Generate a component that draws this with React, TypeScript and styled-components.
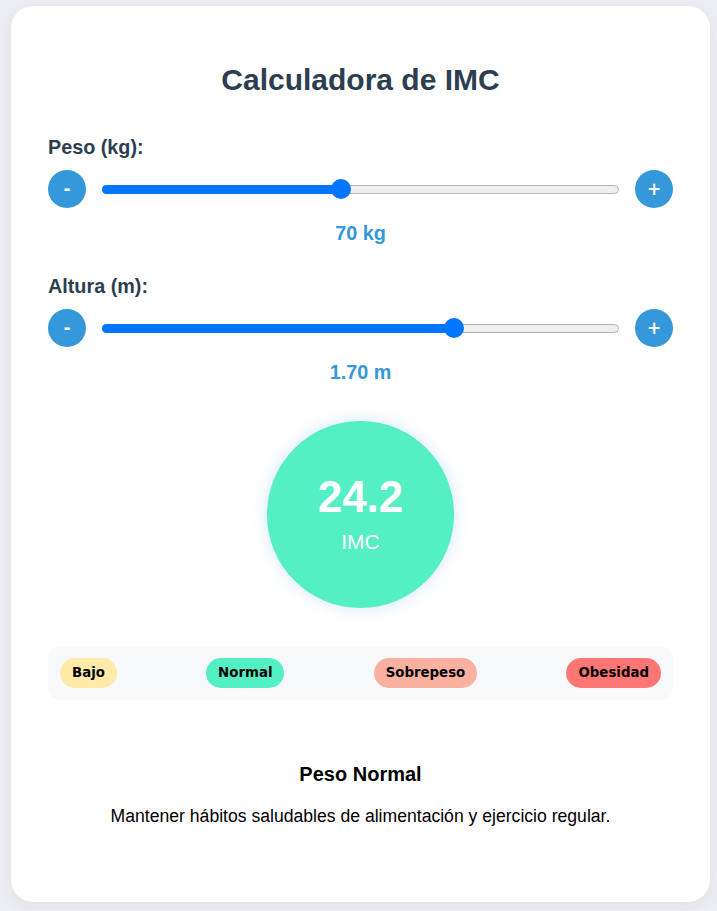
import React, { useState } from "react";
import styled, { createGlobalStyle } from "styled-components";

const GlobalStyle = createGlobalStyle`
  html, body { margin: 0; padding: 0; }
  body {
    background: #eceef2;
    font-family: "Liberation Sans", Arial, sans-serif;
  }
  * { box-sizing: border-box; }
`;

const Page = styled.div`
  padding: 6px 7px 8px 11px;
`;

const Card = styled.div`
  width: 699px;
  background: #ffffff;
  border-radius: 22px;
  padding: 57px 37px 77px;
  box-shadow: 0 4px 18px rgba(0, 0, 0, 0.06);
`;

const Title = styled.h1`
  margin: 0 0 39px;
  text-align: center;
  font-size: 30px;
  line-height: 34px;
  font-weight: 700;
  color: #2c3e50;
`;

const InputGroup = styled.div`
  & + & {
    margin-top: 31px;
  }
`;

const Label = styled.div`
  font-size: 19.8px;
  line-height: 22px;
  font-weight: 700;
  color: #2c3e50;
  margin-bottom: 12px;
`;

const SliderRow = styled.div`
  display: flex;
  align-items: center;
  gap: 16px;
`;

const RoundButton = styled.button`
  flex: 0 0 38px;
  width: 38px;
  height: 38px;
  border: none;
  border-radius: 50%;
  background: #3498db;
  color: #ffffff;
  font-family: "DejaVu Sans", sans-serif;
  font-weight: 700;
  font-size: 17px;
  line-height: 1;
  padding: 0;
  display: flex;
  align-items: center;
  justify-content: center;
  cursor: pointer;
`;

const SliderWrap = styled.div`
  position: relative;
  flex: 1;
  height: 20px;
  display: flex;
  align-items: center;
`;

const Track = styled.div`
  width: 100%;
  height: 9px;
  background: #efefef;
  border: 1px solid #b2b2b2;
  border-radius: 5px;
`;

const Fill = styled.div`
  position: absolute;
  left: 0;
  top: 50%;
  height: 9px;
  margin-top: -4.5px;
  width: calc(10px + var(--p) * (100% - 20px));
  background: #0075ff;
  border-radius: 5px;
`;

const Range = styled.input`
  position: absolute;
  inset: 0;
  width: 100%;
  height: 20px;
  margin: 0;
  background: transparent;
  -webkit-appearance: none;
  appearance: none;
  cursor: pointer;

  &::-webkit-slider-runnable-track {
    height: 20px;
    background: transparent;
  }
  &::-webkit-slider-thumb {
    -webkit-appearance: none;
    appearance: none;
    width: 20px;
    height: 20px;
    border-radius: 50%;
    background: #0075ff;
    border: none;
  }
  &:focus {
    outline: none;
  }
`;

const ValueText = styled.div`
  margin-top: 14px;
  text-align: center;
  font-size: 19.8px;
  line-height: 22px;
  font-weight: 700;
  color: #3498db;
`;

const Circle = styled.div<{ $bg: string }>`
  width: 187px;
  height: 187px;
  margin: 38px auto 38px;
  border-radius: 50%;
  background: ${(p) => p.$bg};
  box-shadow: 0 0 16px rgba(52, 152, 219, 0.22);
  display: flex;
  flex-direction: column;
  align-items: center;
  justify-content: center;
  color: #ffffff;
`;

const BmiValue = styled.div`
  font-size: 44px;
  line-height: 50px;
  font-weight: 700;
  margin-top: -3px;
`;

const BmiLabel = styled.div`
  font-size: 21px;
  line-height: 24px;
  margin-top: 8px;
`;

const Legend = styled.div`
  display: flex;
  justify-content: space-between;
  align-items: center;
  background: #f8f9fa;
  border-radius: 12px;
  padding: 12px;
`;

const Pill = styled.span<{ $bg: string }>`
  display: inline-block;
  background: ${(p) => p.$bg};
  border-radius: 15px;
  padding: 0 12px;
  height: 30px;
  line-height: 30px;
  font-family: "DejaVu Sans", sans-serif;
  font-size: 13.33px;
  font-weight: 700;
  color: #000000;
`;

const Result = styled.div`
  margin-top: 63px;
  text-align: center;
  color: #000000;
`;

const ResultTitle = styled.div`
  font-size: 20px;
  line-height: 22px;
  font-weight: 700;
`;

const ResultText = styled.p`
  margin: 22px 0 0;
  font-size: 17.6px;
  line-height: 18px;
`;

const categories = [
  { name: "Bajo", color: "#ffeaa7" },
  { name: "Normal", color: "#55efc4" },
  { name: "Sobrepeso", color: "#fab1a0" },
  { name: "Obesidad", color: "#ff7675" },
];

export default function App() {
  const [weight, setWeight] = useState(70);
  const [height, setHeight] = useState(1.7);

  const wMin = 10;
  const wMax = 140;
  const hMin = 0.6;
  const hMax = 2.2;

  const bmi = weight / (height * height);
  const wp = (weight - wMin) / (wMax - wMin);
  const hp = (height - hMin) / (hMax - hMin);

  const clampW = (v: number) => Math.min(wMax, Math.max(wMin, v));
  const clampH = (v: number) =>
    Math.round(Math.min(hMax, Math.max(hMin, v)) * 100) / 100;

  return (
    <>
      <GlobalStyle />
      <Page>
        <Card>
          <Title>Calculadora de IMC</Title>

          <InputGroup>
            <Label>Peso (kg):</Label>
            <SliderRow>
              <RoundButton onClick={() => setWeight(clampW(weight - 1))}>-</RoundButton>
              <SliderWrap>
                <Track />
                <Fill style={{ ["--p" as string]: wp } as React.CSSProperties} />
                <Range
                  type="range"
                  min={wMin}
                  max={wMax}
                  step={1}
                  value={weight}
                  onChange={(e) => setWeight(Number(e.target.value))}
                />
              </SliderWrap>
              <RoundButton onClick={() => setWeight(clampW(weight + 1))}>+</RoundButton>
            </SliderRow>
            <ValueText>{weight} kg</ValueText>
          </InputGroup>

          <InputGroup>
            <Label>Altura (m):</Label>
            <SliderRow>
              <RoundButton onClick={() => setHeight(clampH(height - 0.01))}>-</RoundButton>
              <SliderWrap>
                <Track />
                <Fill style={{ ["--p" as string]: hp } as React.CSSProperties} />
                <Range
                  type="range"
                  min={hMin}
                  max={hMax}
                  step={0.01}
                  value={height}
                  onChange={(e) => setHeight(Number(e.target.value))}
                />
              </SliderWrap>
              <RoundButton onClick={() => setHeight(clampH(height + 0.01))}>+</RoundButton>
            </SliderRow>
            <ValueText>{height.toFixed(2)} m</ValueText>
          </InputGroup>

          <Circle $bg="#55efc4">
            <BmiValue>{bmi.toFixed(1)}</BmiValue>
            <BmiLabel>IMC</BmiLabel>
          </Circle>

          <Legend>
            {categories.map((c) => (
              <Pill key={c.name} $bg={c.color}>
                {c.name}
              </Pill>
            ))}
          </Legend>

          <Result>
            <ResultTitle>Peso Normal</ResultTitle>
            <ResultText>
              Mantener hábitos saludables de alimentación y ejercicio regular.
            </ResultText>
          </Result>
        </Card>
      </Page>
    </>
  );
}
